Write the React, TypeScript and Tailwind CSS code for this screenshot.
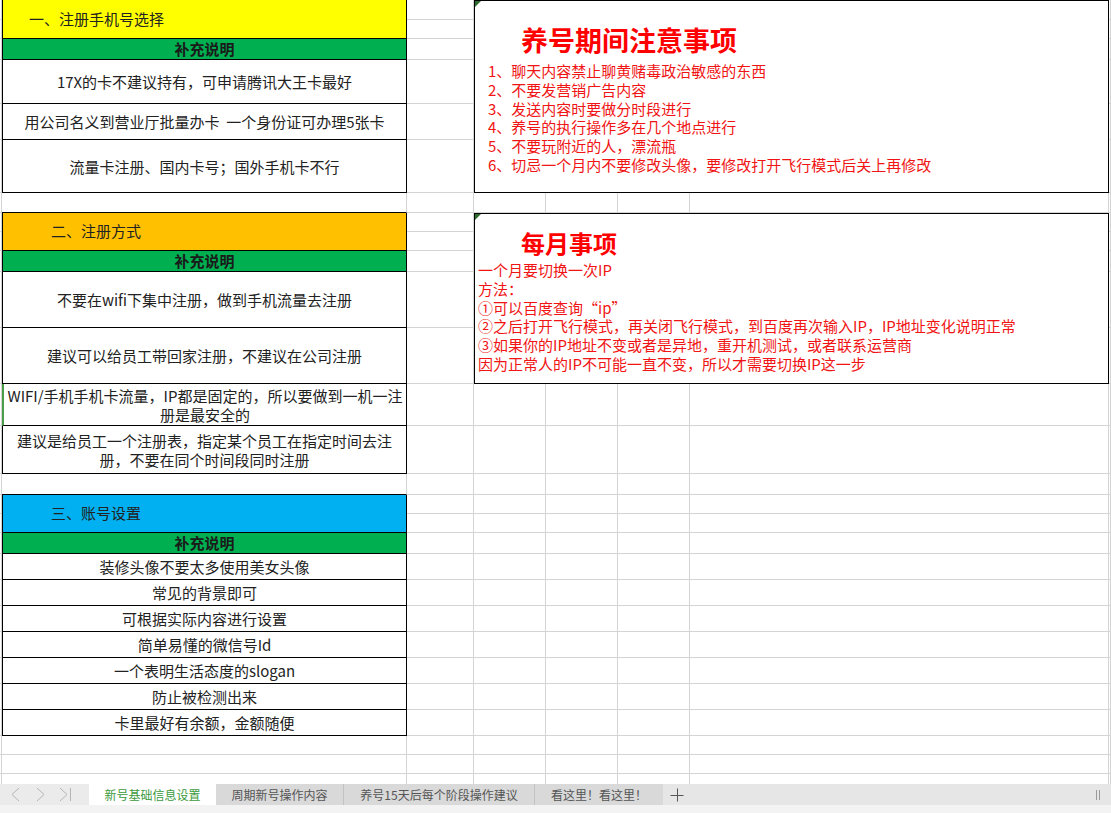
import React from "react";

const A = "col-start-2 border-l border-r border-b border-black flex items-center justify-center text-center text-[15px] leading-[19px] text-[#222] bg-white";
const GREEN = "col-start-2 border-l border-r border-b border-black flex items-center justify-center bg-[#00b050] text-[15px] font-bold text-[#1a1a1a]";

const Tri = () => (
  <div className="absolute top-0 left-0 w-0 h-0 border-t-[6px] border-t-[#2e6b2e] border-r-[6px] border-r-transparent" />
);

export default function App() {
  const bg = Array.from({ length: 224 });
  return (
    <div className="w-[1111px] h-[813px] flex flex-col bg-white overflow-hidden font-['Noto_Sans_CJK_SC',sans-serif]">
      <div className="h-[784px] overflow-hidden">
        <div className="grid grid-cols-[2px_405px_67px_72px_72px_72px_419px_2px] grid-rows-[20px_19px_21px_44px_36px_53px_20px_19px_19px_21px_56px_56px_42px_48px_21px_19px_19px_21px_26px_26px_26px_26px_26px_26px_26px_19px_19px_19px]">
          {/* section 1 */}
          <div className="col-start-2 row-start-1 row-span-2 border-l border-r border-b border-black bg-[#ffff00] flex items-center pl-[26px] text-[15px] text-[#222]">一、注册手机号选择</div>
          <div className={`${GREEN} row-start-3`}>补充说明</div>
          <div className={`${A} row-start-4`}>17X的卡不建议持有，可申请腾讯大王卡最好</div>
          <div className={`${A} row-start-5`}>用公司名义到营业厅批量办卡&nbsp;&nbsp;一个身份证可办理5张卡</div>
          <div className={`${A} row-start-6`}>流量卡注册、国内卡号；国外手机卡不行</div>
          <div className="col-start-2 row-start-7 border-r border-b border-r-[#d4d4d4] border-b-black" />

          {/* section 2 */}
          <div className="col-start-2 row-start-8 row-span-2 border-l border-r border-b border-black bg-[#ffc000] flex items-center pl-[48px] text-[15px] text-[#222]">二、注册方式</div>
          <div className={`${GREEN} row-start-10`}>补充说明</div>
          <div className={`${A} row-start-11`}>不要在wifi下集中注册，做到手机流量去注册</div>
          <div className={`${A} row-start-12`}>建议可以给员工带回家注册，不建议在公司注册</div>
          <div className="col-start-2 row-start-13 border-l-2 border-l-[#4a9e4a] border-r border-b border-black flex flex-col items-center justify-center text-center text-[15px] leading-[19px] text-[#222] bg-white">
            <span className="whitespace-nowrap">WIFI/手机手机卡流量，IP都是固定的，所以要做到一机一注</span>
            <span className="whitespace-nowrap">册是最安全的</span>
          </div>
          <div className={`${A} row-start-14 flex-col`}>
            <span className="whitespace-nowrap">建议是给员工一个注册表，指定某个员工在指定时间去注</span>
            <span className="whitespace-nowrap">册，不要在同个时间段同时注册</span>
          </div>
          <div className="col-start-2 row-start-15 border-r border-b border-r-[#d4d4d4] border-b-black" />

          {/* section 3 */}
          <div className="col-start-2 row-start-16 row-span-2 border-l border-r border-b border-black bg-[#00b0f0] flex items-center pl-[48px] text-[15px] text-[#222]">三、账号设置</div>
          <div className={`${GREEN} row-start-18`}>补充说明</div>
          <div className={`${A} row-start-19`}>装修头像不要太多使用美女头像</div>
          <div className={`${A} row-start-20`}>常见的背景即可</div>
          <div className={`${A} row-start-21`}>可根据实际内容进行设置</div>
          <div className={`${A} row-start-22`}>简单易懂的微信号Id</div>
          <div className={`${A} row-start-23`}>一个表明生活态度的slogan</div>
          <div className={`${A} row-start-24`}>防止被检测出来</div>
          <div className={`${A} row-start-25`}>卡里最好有余额，金额随便</div>

          {/* box 1 */}
          <div className="relative col-start-4 col-span-4 row-start-1 row-span-6 border border-black bg-white flex flex-col">
            <Tri />
            <div className="mt-[22px] pl-[46px] text-[27px] leading-[34px] font-bold text-[#ff0000]">养号期间注意事项</div>
            <div className="mt-[5px] pl-[13px] text-[15px] leading-[18.8px] text-[#f01414]">
              <div>1、聊天内容禁止聊黄赌毒政治敏感的东西</div>
              <div>2、不要发营销广告内容</div>
              <div>3、发送内容时要做分时段进行</div>
              <div>4、养号的执行操作多在几个地点进行</div>
              <div>5、不要玩附近的人，漂流瓶</div>
              <div>6、切忌一个月内不要修改头像，要修改打开飞行模式后关上再修改</div>
            </div>
          </div>

          {/* box 2 */}
          <div className="relative col-start-4 col-span-4 row-start-8 row-span-5 border border-black bg-white flex flex-col">
            <Tri />
            <div className="mt-[14px] pl-[46px] text-[24px] leading-[30px] font-bold text-[#ff0000]">每月事项</div>
            <div className="mt-[3px] pl-[3px] text-[15px] leading-[18.8px] text-[#f01414]">
              <div>一个月要切换一次IP</div>
              <div>方法：</div>
              <div>①可以百度查询“ip”</div>
              <div>②之后打开飞行模式，再关闭飞行模式，到百度再次输入IP，IP地址变化说明正常</div>
              <div>③如果你的IP地址不变或者是异地，重开机测试，或者联系运营商</div>
              <div>因为正常人的IP不可能一直不变，所以才需要切换IP这一步</div>
            </div>
          </div>

          {bg.map((_, i) => (
            <div key={i} className="border-r border-b border-[#d4d4d4]" />
          ))}
        </div>
      </div>

      {/* sheet tabs */}
      <div className="h-[21px] flex items-stretch bg-[#e6e6e6] text-[12px] leading-none">
        <div className="w-[89px] bg-[#ebebeb]">
          <svg width="89" height="21" viewBox="0 0 89 21" fill="none" stroke="#b5b5b5" strokeWidth="1">
            <polyline points="19,4 12,10.5 19,17" />
            <polyline points="37,4 44,10.5 37,17" />
            <polyline points="60,4 67,10.5 60,17" />
            <line x1="70.5" y1="4" x2="70.5" y2="17" />
          </svg>
        </div>
        <div className="w-[127px] bg-white text-[#3c9a3c] flex items-center justify-center">新号基础信息设置</div>
        <div className="w-[127px] bg-[#d9d9d9] text-[#555] flex items-center justify-center">周期新号操作内容</div>
        <div className="w-[191px] bg-[#d9d9d9] text-[#555] flex items-center justify-center border-l border-[#c2c2c2]">养号15天后每个阶段操作建议</div>
        <div className="w-[129px] bg-[#d9d9d9] text-[#555] flex items-center justify-center border-l border-[#c2c2c2]">看这里！看这里！</div>
        <div className="w-[28px] flex items-center justify-center">
          <svg width="14" height="14" viewBox="0 0 14 14" fill="none" stroke="#555" strokeWidth="1">
            <line x1="7.5" y1="0.5" x2="7.5" y2="13.5" />
            <line x1="0.5" y1="7.5" x2="13.5" y2="7.5" />
          </svg>
        </div>
        <div className="flex-1" />
        <div className="w-[16px] flex items-center">
          <svg width="6" height="10" viewBox="0 0 6 10" fill="none" stroke="#9a9a9a" strokeWidth="1">
            <line x1="1.5" y1="0" x2="1.5" y2="10" />
            <line x1="4.5" y1="0" x2="4.5" y2="10" />
          </svg>
        </div>
      </div>
      <div className="h-[8px] bg-[#f3f3f3]" />
    </div>
  );
}
